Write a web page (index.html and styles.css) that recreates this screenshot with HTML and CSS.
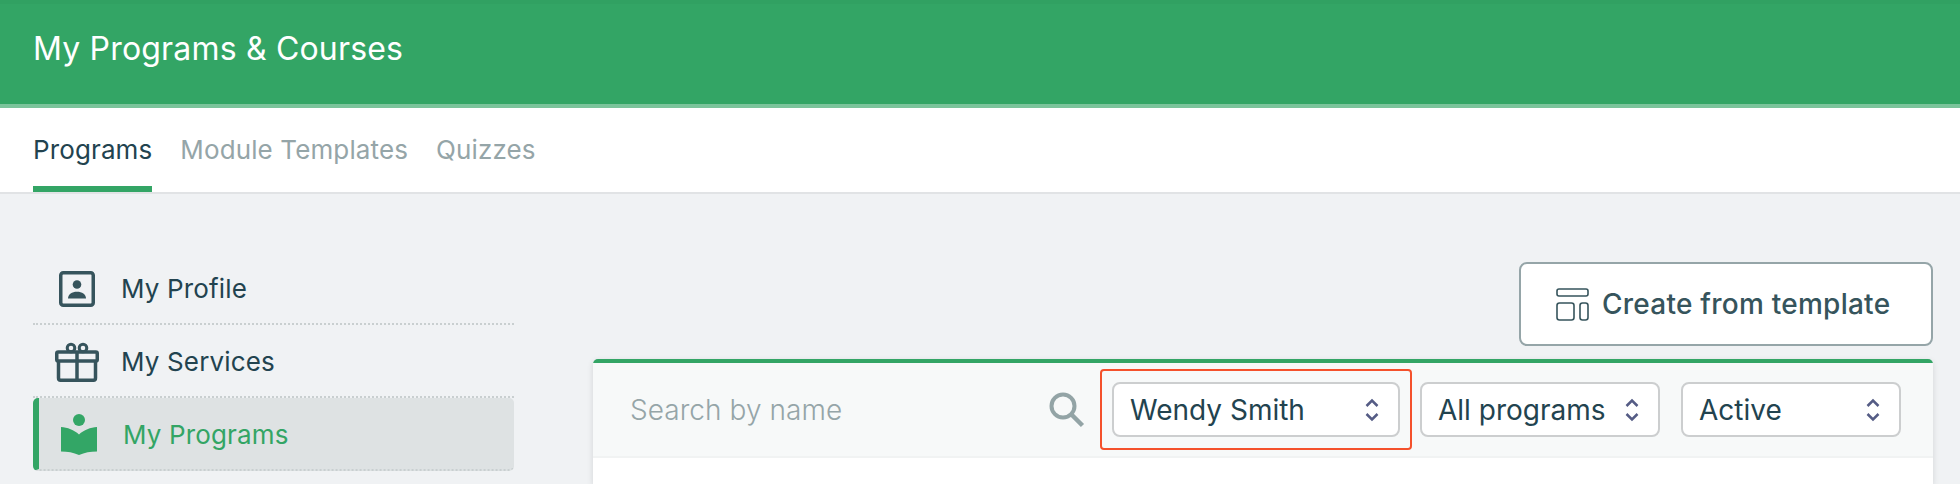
FILE: index.html
```html
<!DOCTYPE html>
<html lang="en">
<head>
    <meta charset="UTF-8">
    <meta name="viewport" content="width=device-width, initial-scale=1.0">
    <title>My Programs &amp; Courses</title>
    <link rel="stylesheet" href="styles.css">
</head>
<body>

<header class="page-header">
    <h1>My Programs &amp; Courses</h1>
</header>

<nav class="tabs">
    <a class="tab active">Programs</a>
    <a class="tab">Module Templates</a>
    <a class="tab">Quizzes</a>
</nav>

<div class="content">
    <aside class="sidebar">
        <a class="side-item">
            <span class="side-icon">
                <svg width="36" height="36" viewBox="0 0 36 36">
                    <rect x="1.750" y="1.750" width="32.500" height="32.500" rx="2.500" fill="none" stroke="#36545c" stroke-width="3.500"/>
                    <circle cx="18" cy="13.500" r="4.300" fill="#36545c"/>
                    <path d="M9 27.500c0-4.200 4-6.700 9-6.700s9 2.500 9 6.700z" fill="#36545c"/>
                </svg>
            </span>
            My Profile
        </a>
        <a class="side-item">
            <span class="side-icon">
                <svg width="44" height="40" viewBox="0 0 44 40">
                    <g fill="none" stroke="#36545c" stroke-width="3.500" stroke-linejoin="round">
                        <rect x="1.750" y="10" width="40.500" height="9" rx="1.500"/>
                        <path d="M3.500 19v17c0 1.300.7 2.200 2 2.200h33c1.300 0 2-.9 2-2.200V19"/>
                        <path d="M22 10v28"/>
                    </g>
                    <g fill="none" stroke="#36545c" stroke-width="3">
                        <circle cx="16" cy="6" r="3.800"/>
                        <circle cx="28" cy="6" r="3.800"/>
                    </g>
                </svg>
            </span>
            My Services
        </a>
        <a class="side-item active">
            <span class="side-icon">
                <svg width="36" height="41" viewBox="0 0 36 41" fill="#33a666">
                    <circle cx="18" cy="6" r="6"/>
                    <path d="M0 13c6.500.5 13 2.800 18 7.500 5-4.700 11.500-7 18-7.500v24.500c-6.500 0-12.500 1-18 3.500-5.500-2.500-11.500-3.500-18-3.500z"/>
                </svg>
            </span>
            My Programs
        </a>
    </aside>

    <main class="main">
        <div class="actions">
            <button class="template-btn">
                <svg width="33" height="33" viewBox="0 0 33 33" fill="none" stroke="#36545c" stroke-width="1.600">
                    <rect x="1" y="1" width="31" height="7" rx="2"/>
                    <rect x="1" y="15" width="17" height="17" rx="2.500"/>
                    <rect x="24" y="15" width="8" height="17" rx="2.500"/>
                </svg>
                Create from template
            </button>
        </div>

        <section class="panel">
            <div class="panel-head">
                <span class="search-text">Search by name</span>
                <svg class="search-icon" width="36" height="36" viewBox="0 0 36 36" fill="none" stroke="#93a4a6">
                    <circle cx="14" cy="14" r="11.500" stroke-width="4"/>
                    <path d="M22.500 22.500L33.500 33.500" stroke-width="4.500"/>
                </svg>
                <div class="highlight">
                    <div class="select select-wendy">
                        Wendy Smith
                        <svg class="chevrons" width="14" height="24" viewBox="0 0 14 24" fill="none" stroke="#555c85" stroke-width="2.500">
                            <path d="M1.500 8L7 2.500 12.500 8"/>
                            <path d="M1.500 16L7 21.500 12.500 16"/>
                        </svg>
                    </div>
                </div>
                <div class="select select-programs">
                    All programs
                    <svg class="chevrons" width="14" height="24" viewBox="0 0 14 24" fill="none" stroke="#555c85" stroke-width="2.500">
                        <path d="M1.500 8L7 2.500 12.500 8"/>
                        <path d="M1.500 16L7 21.500 12.500 16"/>
                    </svg>
                </div>
                <div class="select select-active">
                    Active
                    <svg class="chevrons" width="14" height="24" viewBox="0 0 14 24" fill="none" stroke="#555c85" stroke-width="2.500">
                        <path d="M1.500 8L7 2.500 12.500 8"/>
                        <path d="M1.500 16L7 21.500 12.500 16"/>
                    </svg>
                </div>
            </div>
        </section>
    </main>
</div>

</body>
</html>
```

FILE: styles.css
```css
* {
    box-sizing: border-box;
}
html, body {
    height: 100%;
}
body {
    margin: 0;
    font-family: Inter, "Liberation Sans", sans-serif;
    background-color: #f0f2f4;
    color: #22434f;
    overflow: hidden;
}
.page-header {
    height: 108px;
    padding: 0 33px;
    display: flex;
    align-items: center;
    background-color: #33a565;
    border-top: 4px solid #31a162;
    border-bottom: 4px solid #7bc49b;
}
.page-header h1 {
    margin: 0 0 12px;
    font-size: 32px;
    font-weight: 400;
    letter-spacing: 0.18px;
    color: #ffffff;
}
.tabs {
    height: 86px;
    padding: 0 33px;
    display: flex;
    gap: 28px;
    background-color: #ffffff;
    border-bottom: 2px solid #e1e3e5;
}
.tab {
    height: 84px;
    padding-top: 27px;
    font-size: 26px;
    font-weight: 400;
    line-height: 30px;
    letter-spacing: 0.12px;
    color: #95a5a8;
}
.tab.active {
    color: #22434f;
    border-bottom: 6px solid #33a565;
}
.content {
    display: flex;
    height: 290px;
    padding: 0 27px 0 33px;
}
.sidebar {
    width: 481px;
    padding-top: 58px;
}
.side-item {
    height: 73px;
    display: flex;
    align-items: center;
    padding-top: 2px;
    font-size: 26px;
    letter-spacing: 0.15px;
    color: #22434f;
    border-bottom: 2px dotted #c9cfd0;
}
.side-icon {
    width: 88px;
    height: 44px;
    flex-shrink: 0;
    display: flex;
    align-items: center;
    justify-content: center;
}
.side-item.active {
    color: #33a565;
    background-color: #dee2e3;
    border-left: 6px solid #33a565;
    border-radius: 5px;
}
.side-item.active .side-icon {
    width: 84px;
    padding-right: 4px;
}
.main {
    width: 1340px;
    margin-left: 79px;
    padding-top: 68px;
}
.actions {
    display: flex;
    justify-content: flex-end;
}
.template-btn {
    width: 414px;
    height: 84px;
    padding: 0 0 0 35px;
    display: flex;
    align-items: center;
    gap: 13px;
    font-family: inherit;
    font-size: 28px;
    font-weight: 500;
    letter-spacing: 0.25px;
    color: #36545c;
    background-color: #ffffff;
    border: 2px solid #95a5a8;
    border-radius: 8px;
}
.panel {
    height: 125px;
    margin-top: 13px;
    background-color: #ffffff;
    border-top: 4px solid #33a565;
    border-radius: 5px 5px 0 0;
    box-shadow: 0 2px 6px rgba(0, 0, 0, 0.12);
}
.panel-head {
    height: 95px;
    padding: 0 32px 0 37px;
    display: flex;
    align-items: center;
    background-color: #f7f9f9;
    border-bottom: 2px solid #f1f3f3;
}
.search-text {
    flex: 1;
    font-size: 28px;
    font-weight: 300;
    letter-spacing: 0.05px;
    color: #95a5a8;
}
.search-icon {
    margin-right: 15px;
}
.highlight {
    padding: 11px 10px;
    margin-right: 8px;
    border: 2px solid #f4512c;
    border-radius: 4px;
}
.select {
    height: 55px;
    padding: 0 19px 0 16px;
    display: flex;
    align-items: center;
    justify-content: space-between;
    font-size: 28px;
    font-weight: 400;
    color: #22434f;
    background-color: #ffffff;
    border: 2px solid #cccecf;
    border-radius: 8px;
}
.select-wendy {
    width: 288px;
}
.select-programs {
    width: 240px;
    margin-right: 21px;
}
.select-active {
    width: 220px;
}
```
